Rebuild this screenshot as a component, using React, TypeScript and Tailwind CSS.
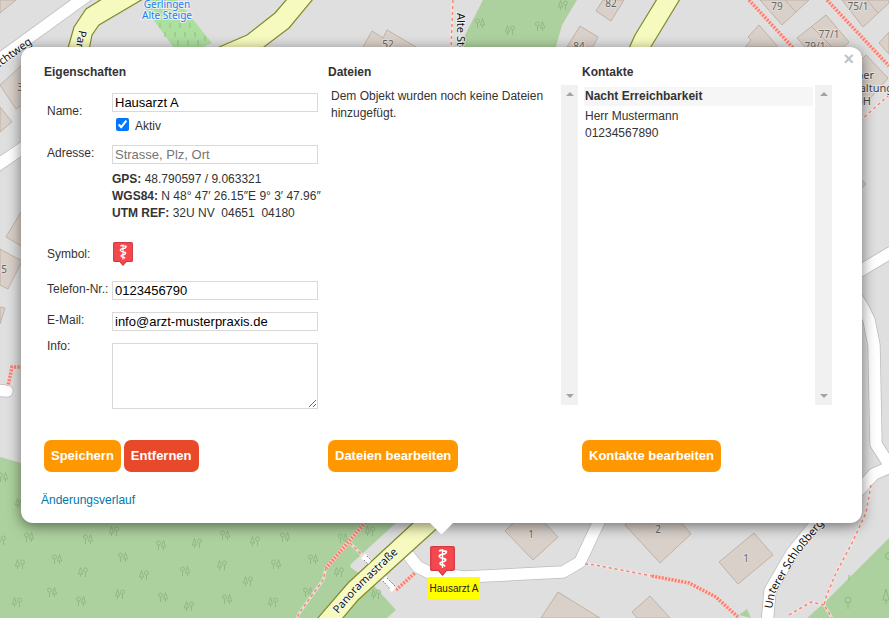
import type { ReactNode } from "react";

const BUILDINGS = [
  "0,0 16,0 0,13",
  "0,85 21,66 30,80 30,100 16,109",
  "0,107 12,122 0,132",
  "6,237 21,212 40,225 40,257",
  "0,249 22,261 8,289 0,285",
  "0,307 5,308 0,324",
  "363,47 372,31 383,38 387,30 416,47 416,60 363,60",
  "603,0 596,11 611,21 624,0",
  "567,47 580,26 598,37 593,47",
  "745,47 751,40 748,37 759,25 778,47",
  "760,0 782,25 796,12 809,0",
  "842,0 863,27 889,3 889,0",
  "797,38 826,15 849,42 844,47 805,47",
  "889,32 879,43 889,54",
  "855,66 866,55 888,78 866,103 855,90",
  "855,174 866,184 855,194",
  "505,531 515,521 543,521 558,537 533,560",
  "625,525 660,563 691,534 679,520 630,520",
  "719,562 754,533 773,555 738,584",
  "541,618 558,592 600,618",
  "632,612 650,596 670,618 637,618",
];

const TREES = [
  [3, 477], [20, 503], [29, 537], [1, 540], [88, 539], [114, 531], [161, 545],
  [197, 543], [225, 535], [255, 541], [285, 537], [20, 564], [57, 559], [83, 572],
  [123, 557], [144, 575], [185, 571], [222, 565], [276, 564], [248, 581], [52, 592],
  [17, 602], [81, 601], [120, 594], [163, 597], [189, 606], [227, 599], [273, 602],
  [343, 538], [370, 531], [313, 559], [339, 572], [308, 592], [376, 594],
  [480, 23], [510, 30], [540, 26], [563, 5],
];

const HOUSE_NUMBERS = [
  { x: 388, y: 48, n: "52" },
  { x: 611, y: 7, n: "82" },
  { x: 579, y: 50, n: "84" },
  { x: 777, y: 10, n: "79" },
  { x: 858, y: 10, n: "75/1" },
  { x: 829, y: 38, n: "77/1" },
  { x: 815, y: 50, n: "79/1" },
  { x: 4, y: 273, n: "5" },
  { x: 20, y: 91, n: "3" },
  { x: 531, y: 538, n: "1" },
  { x: 658, y: 533, n: "2" },
  { x: 746, y: 562, n: "1" },
];

const ROADS = [
  "M-10 66 L81 0 L95 -10",
  "M-5 167 L30 143",
  "M-5 390 L7 391",
  "M850 277 L895 250",
  "M850 287 L862 306 L869 320 L874 345 L876 444 L892 469",
  "M850 500 L862 487 L874 474 L895 465",
  "M405 551 L418 567 L430 573 L465 577 L563 572 L580 562 L602 515",
  "M823 515 L792 553 L770 591 L767 625",
];

const MAIN_ROADS = [
  "102,-1 86,9 74,27 66,55 88,55 92,35 99,25 143,-1",
  "287,-1 275,13 247,35 210,51 260,50 289,28 313,-1",
  "657,-1 635,35 626,55 646,55 680,-1",
  "413,523 348,583 317,619 342,619 358,600 433,532 450,516 420,516",
];

const PATHS_WIDE = [
  "M749 0 L796 51",
  "M827 0 L889 66",
  "M652 576 L689 583 L716 597 L739 618",
  "M370 517 L326 568",
  "M396 590 L415 573",
  "M26 367 L12 367 L8 386",
];

const PATHS_THIN = [
  "M453 0 L451 50",
  "M889 95 L860 121",
  "M585 564 L595 565 L652 576",
  "M871 485 L866 513 L852 543 L836 573 L826 597 L824 605 L832 618",
  "M789 615 L811 602 L824 605",
  "M326 568 L323 580 L300 612 L297 618",
  "M350 543 L365 558",
  "M383 578 L396 590",
];

type PinProps = {
  className?: string;
  x?: number;
  y?: number;
  width?: number;
  height?: number;
};

function Pin(props: PinProps) {
  return (
    <svg {...props} viewBox="0 0 24 30" preserveAspectRatio="none" aria-hidden="true">
      <path
        d="M2 .7H22Q23.3 .7 23.3 2V23Q23.3 24.3 22 24.3H16L12 29L8 24.3H2Q.7 24.3 .7 23V2Q.7 .7 2 .7Z"
        fill="#f2484e"
        stroke="#d63a41"
        strokeWidth="1.3"
      />
      <path d="M12 3V22" stroke="#fff" strokeWidth="1.3" />
      <path
        d="M9 5.5Q10 3.5 12 4.7Q13.5 5.5 16 5M15.7 5Q16 8 12 8.3Q8.3 9 9 10.5Q9.5 12 12 12.3Q15.5 12.8 15 14.3Q14.5 15.7 12 16Q9.3 16.5 9.8 17.8Q10.3 19 13.5 19.2L14.3 20.5"
        fill="none"
        stroke="#fff"
        strokeWidth="1.7"
      />
    </svg>
  );
}

function Map() {
  return (
    <svg
      className="absolute inset-0 h-full w-full bg-[#dfdfdf] [font-family:'Noto_Sans',sans-serif]"
      viewBox="0 0 889 618"
      preserveAspectRatio="xMidYMid slice"
      role="img"
      aria-label="Karte"
    >
      <defs>
        <path id="brechtweg" d="M-3 69 L52 29" />
        <path id="panorama" d="M338 614 L357 592 L420 532" />
        <path id="schlossberg" d="M772 609 L775 593 L797 556 L829 517" />
        <g id="trees" fill="none" stroke="#8fb682" strokeWidth="0.9">
          <circle cx="-2.5" cy="-2" r="2" />
          <path d="M-2.5 0V5M2.5 -4.5L0.4 2H4.6ZM2.5 2V5" />
        </g>
      </defs>

      <g fill="#add19e">
        <path d="M0 457L21 463L200 500H421L350 565L366 577L396 610L387 618H0Z" />
        <path d="M483 0H577L562 25L555 50H458L465 35Z" />
        <path d="M889 538L824 603L807 618H889ZM739 615L747 609L751 618Z" />
      </g>
      {/* strip of residential ground between forest edge and road */}
      <path d="M397 523L350 567L360 574L420 520Z" fill="#dfdfdf" />
      <path d="M148 0H177L212 43L200 48H174L145 8Z" fill="#addf9f" />
      <path
        d="M160 23v5M170 23v5M180 23v5M190 23v5M165 32v5M175 32v5M185 32v5M195 32v5M205 36v5M178 40v5M188 40v5M198 40v5M178 15v5"
        stroke="#91bd86"
      />
      {TREES.map(([x, y], i) => (
        <use key={i} href="#trees" transform={i % 2 ? `translate(${x} ${y}) scale(-1 1)` : `translate(${x} ${y})`} />
      ))}
      <g fill="none" stroke="#8fb682">
        <circle cx="848" cy="600" r="3" />
        <circle cx="889" cy="556" r="3.5" />
        <path d="M848 603V609M886 589L883 600H889ZM886 600V604M849 575V580" />
      </g>

      <g fill="#d9d0c9" stroke="#c1b2a5">
        {BUILDINGS.map((points) => (
          <polygon key={points} points={points} />
        ))}
        <path d="M785 0L796 12M867 0L878 13M812 27L832 47" fill="none" />
      </g>

      <g fill="none" strokeLinecap="round" strokeLinejoin="round">
        {ROADS.map((d) => (
          <path key={d} d={d} stroke="#bcbcbc" strokeWidth="13" />
        ))}
        {ROADS.map((d) => (
          <path key={d} d={d} stroke="#fff" strokeWidth="11.5" />
        ))}
      </g>
      {MAIN_ROADS.map((points) => (
        <polygon key={points} points={points} fill="#f7fabf" stroke="#7f8c2c" strokeWidth="1.2" />
      ))}

      <g fill="none">
        {PATHS_THIN.map((d) => (
          <path key={d} d={d} stroke="#f0e8e6" strokeWidth="3" strokeOpacity="0.7" />
        ))}
        {PATHS_THIN.map((d) => (
          <path key={d} d={d} stroke="#fa8072" strokeWidth="1.4" strokeDasharray="3 3" />
        ))}
        {PATHS_WIDE.map((d) => (
          <path key={d} d={d} stroke="#f4d9d5" strokeWidth="4" />
        ))}
        {PATHS_WIDE.map((d) => (
          <path key={d} d={d} stroke="#fa8072" strokeWidth="3.5" strokeDasharray="2 1.3" />
        ))}
        <path d="M363 556L370 562M384 578L394 590" stroke="#fff" strokeWidth="6" />
        <path d="M364 560L369 565M367 556L372 561M383 581L390 589M387 578L395 586" stroke="#777" strokeDasharray="1.5 1" />
      </g>

      <g fontSize="10" textAnchor="middle" fill="#666" stroke="#e4dcd6" strokeWidth="2" paintOrder="stroke">
        {HOUSE_NUMBERS.map(({ x, y, n }) => (
          <text key={`${x}-${y}`} x={x} y={y}>
            {n}
          </text>
        ))}
      </g>
      <g fontSize="10" fill="#1f7df2" stroke="#eef2ea" strokeWidth="2" paintOrder="stroke" textAnchor="middle">
        <text x="167" y="8">Gerlingen</text>
        <text x="167" y="19">Alte Steige</text>
      </g>
      <g fontSize="11" fill="#444" stroke="#e8e4e0" strokeWidth="2" paintOrder="stroke" textAnchor="end">
        <text x="874" y="79">ner</text>
        <text x="893" y="92">altung</text>
        <text x="871" y="105">bH</text>
      </g>
      <g fontSize="11" fill="#111" stroke="#fff" strokeOpacity="0.7" strokeWidth="1.5" paintOrder="stroke">
        <text>
          <textPath href="#brechtweg">echtweg</textPath>
        </text>
        <text>
          <textPath href="#panorama">Panoramastraße</textPath>
        </text>
        <text>
          <textPath href="#schlossberg">Unterer Schloßberg</textPath>
        </text>
        <text transform="translate(457 13) rotate(90)">Alte Steige</text>
        <text transform="translate(79 30) rotate(100)">Panorama</text>
      </g>

      <Pin x={430} y={546} width={25} height={30} />
      <rect x="428" y="577" width="52" height="22" fill="#ff0" />
      <text x="454" y="592" fontSize="10" textAnchor="middle" fill="#222" className="[font-family:'Liberation_Sans',Arial,sans-serif]">
        Hausarzt A
      </text>
    </svg>
  );
}

const inputClass =
  "block h-[19px] w-full border border-[#d9d9d9] bg-white px-[2px] text-[13px] leading-[17px] text-black outline-none placeholder:text-[#757575]";

function Field({ id, label, className = "", children }: { id: string; label: string; className?: string; children: ReactNode }) {
  return (
    <div className={`flex items-start ${className}`}>
      <label htmlFor={id} className="w-[68px] shrink-0 pl-[3px] whitespace-nowrap">
        {label}
      </label>
      <div className="min-w-0 flex-1">{children}</div>
    </div>
  );
}

function ScrollPanel({ children }: { children: ReactNode }) {
  return (
    <div className="flex h-80">
      <div className="min-w-0 flex-1 p-[2px]">{children}</div>
      <div className="flex w-[17px] flex-col items-center justify-between bg-[#f1f1f1] py-[7px]" aria-hidden="true">
        <div className="border-x-4 border-b-4 border-x-transparent border-b-[#a3a3a3]" />
        <div className="border-x-4 border-t-4 border-x-transparent border-t-[#a3a3a3]" />
      </div>
    </div>
  );
}

function ActionButton({ danger = false, children }: { danger?: boolean; children: ReactNode }) {
  return (
    <button
      type="button"
      className={`h-8 rounded-[7px] px-[7px] pb-[2px] text-[13px] font-bold whitespace-nowrap text-white ${danger ? "bg-[#e8492b]" : "bg-[#ff9800]"}`}
    >
      {children}
    </button>
  );
}

const columns = "grid grid-cols-[minmax(0,284fr)_minmax(0,254fr)_minmax(0,250fr)]";

export default function App() {
  return (
    <main className="relative min-h-screen overflow-hidden pt-[47px] pr-[27px] pb-[95px] pl-[21px] text-[12px] leading-[17px] text-[#333] [font-family:'Liberation_Sans',Arial,sans-serif]">
      <Map />

      <section className="relative rounded-xl bg-white pt-[17px] pr-[30px] pb-[14px] pl-[23px] shadow-[0_3px_14px_rgba(0,0,0,0.5)]">
        <button
          type="button"
          aria-label="Schließen"
          className="absolute top-1 right-2 text-[18px] leading-4 font-bold text-[#c3c3c3]"
        >
          ×
        </button>

        <div className={columns}>
          <div>
            <h2 className="font-bold">Eigenschaften</h2>
            <form className="mt-3 pr-[10px]">
              <div className="flex">
                <label htmlFor="name" className="w-[68px] shrink-0 pt-[10px] pl-[3px]">
                  Name:
                </label>
                <div className="min-w-0 flex-1">
                  <input id="name" className={inputClass} defaultValue="Hausarzt A" />
                  <label className="mt-[6px] flex items-start gap-[6px] pl-1">
                    <input type="checkbox" defaultChecked className="size-[13px] accent-[#0075ff]" />
                    Aktiv
                  </label>
                </div>
              </div>

              <Field id="address" label="Adresse:" className="mt-[10px]">
                <input id="address" className={inputClass} placeholder="Strasse, Plz, Ort" />
                <div className="mt-[7px] whitespace-pre">
                  <p><b>GPS:</b> 48.790597 / 9.063321</p>
                  <p><b>WGS84:</b> N 48° 47′ 26.15″E 9° 3′ 47.96″</p>
                  <p><b>UTM REF:</b> 32U NV  04651  04180</p>
                </div>
              </Field>

              <div className="mt-5 flex items-center">
                <span className="w-[68px] pl-[3px]">Symbol:</span>
                <button type="button" aria-label="Symbol wählen" className="px-[1px]">
                  <Pin className="h-6 w-5" />
                </button>
              </div>

              <Field id="phone" label="Telefon-Nr.:" className="mt-[15px]">
                <input id="phone" type="tel" className={inputClass} defaultValue="0123456790" />
              </Field>
              <Field id="email" label="E-Mail:" className="mt-3">
                <input id="email" type="email" className={inputClass} defaultValue="info@arzt-musterpraxis.de" />
              </Field>
              <Field id="info" label="Info:" className="mt-[7px]">
                <textarea id="info" className="mt-[5px] block h-[66px] w-full border border-[#d9d9d9] bg-white outline-none" />
              </Field>
            </form>
          </div>

          <div className="pr-1">
            <h2 className="mb-1 font-bold">Dateien</h2>
            <ScrollPanel>
              <p className="p-[1px]">Dem Objekt wurden noch keine Dateien hinzugefügt.</p>
            </ScrollPanel>
          </div>

          <div>
            <h2 className="mb-1 font-bold">Kontakte</h2>
            <ScrollPanel>
              <h3 className="bg-[#f6f6f6] p-[1px] font-bold">Nacht Erreichbarkeit</h3>
              <p className="mt-[2px] px-[1px]">
                Herr Mustermann
                <br />
                01234567890
              </p>
            </ScrollPanel>
          </div>
        </div>

        <div className={`mt-[31px] ${columns}`}>
          <div className="flex gap-[3px]">
            <ActionButton>Speichern</ActionButton>
            <ActionButton danger>Entfernen</ActionButton>
          </div>
          <div>
            <ActionButton>Dateien bearbeiten</ActionButton>
          </div>
          <div>
            <ActionButton>Kontakte bearbeiten</ActionButton>
          </div>
        </div>

        <a href="#verlauf" className="mt-5 -ml-[3px] block w-fit text-[#0078a8]">
          Änderungsverlauf
        </a>

        <div className="absolute top-full left-1/2 h-5 w-10 -translate-x-1/2 overflow-hidden">
          <div className="mx-auto -mt-[9px] size-[17px] rotate-45 bg-white" />
        </div>
      </section>
    </main>
  );
}
